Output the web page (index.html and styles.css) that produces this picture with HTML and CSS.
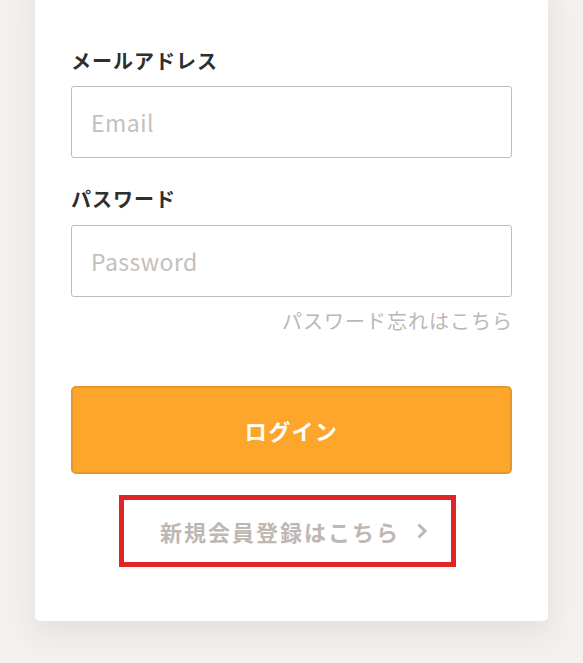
FILE: index.html
```html
<!DOCTYPE html>
<html lang="ja">
<head>
<meta charset="utf-8">
<title>ログイン</title>
<link rel="stylesheet" href="styles.css">
</head>
<body>
<div class="page">
  <div class="card">
    <form class="form">
      <label class="label" for="email">メールアドレス</label>
      <input class="input" id="email" type="email" placeholder="Email">
      <label class="label label-second" for="password">パスワード</label>
      <input class="input" id="password" type="password" placeholder="Password">
      <div class="forgot-row"><a class="forgot" href="#">パスワード忘れはこちら</a></div>
      <button class="login" type="button">ログイン</button>
      <div class="register-row">
        <a class="register" href="#">新規会員登録はこちら<svg class="chev" width="12" height="18" viewBox="0 0 12 18"><polyline points="2.5,2.5 9,9 2.5,15.5" fill="none" stroke="currentColor" stroke-width="3" stroke-linecap="butt" stroke-linejoin="miter"/></svg></a>
      </div>
    </form>
  </div>
</div>
</body>
</html>
```

FILE: styles.css
```css
html, body {
  margin: 0;
  padding: 0;
}
body {
  background: #f3f0ed;
  font-family: "Noto Sans CJK JP", "Noto Sans", sans-serif;
  height: 663px;
  overflow: hidden;
}
.page {
  padding: 0 35px;
}
.card {
  background: #fff;
  margin-top: -20px;
  padding: 66px 36px 54px;
  border-radius: 5px;
  box-shadow: 0 12px 28px rgba(90, 70, 50, 0.09);
}
.form {
  display: flex;
  flex-direction: column;
}
.label {
  display: block;
  font-size: 20px;
  line-height: 30px;
  font-weight: 700;
  color: #2e2e2e;
  letter-spacing: 0.05em;
  margin-bottom: 10px;
}
.label-second {
  margin-top: 26px;
  margin-bottom: 11px;
}
.input {
  box-sizing: border-box;
  width: 100%;
  height: 72px;
  border: 1px solid #bdbdbd;
  border-radius: 3px;
  padding: 0 19px;
  font-family: inherit;
  font-size: 23px;
  color: #333;
  background: #fff;
  outline: none;
}
.input::placeholder {
  color: #c5bfbb;
  letter-spacing: 0.02em;
}
.forgot-row {
  display: flex;
  justify-content: flex-end;
  margin-top: 9px;
}
.forgot {
  font-size: 20px;
  line-height: 30px;
  color: #bdb7b3;
  text-decoration: none;
  letter-spacing: 0.05em;
  margin-right: -1px;
}
.login {
  margin-top: 50px;
  height: 88px;
  width: 100%;
  background: #fea62c;
  border: 2px solid #e6972b;
  border-radius: 5px;
  color: #fff;
  font-family: inherit;
  font-size: 22px;
  font-weight: 700;
  letter-spacing: 0.06em;
}
.register-row {
  display: flex;
  justify-content: center;
  margin-top: 21px;
}
.register {
  box-sizing: border-box;
  height: 72px;
  display: inline-flex;
  align-items: center;
  gap: 16px;
  padding: 0 23px 0 36px;
  margin-right: 8px;
  border: 5px solid #e02525;
  color: #beb7b3;
  font-size: 22px;
  font-weight: 700;
  letter-spacing: 0.09em;
  text-decoration: none;
}
.chev {
  display: block;
}
```
